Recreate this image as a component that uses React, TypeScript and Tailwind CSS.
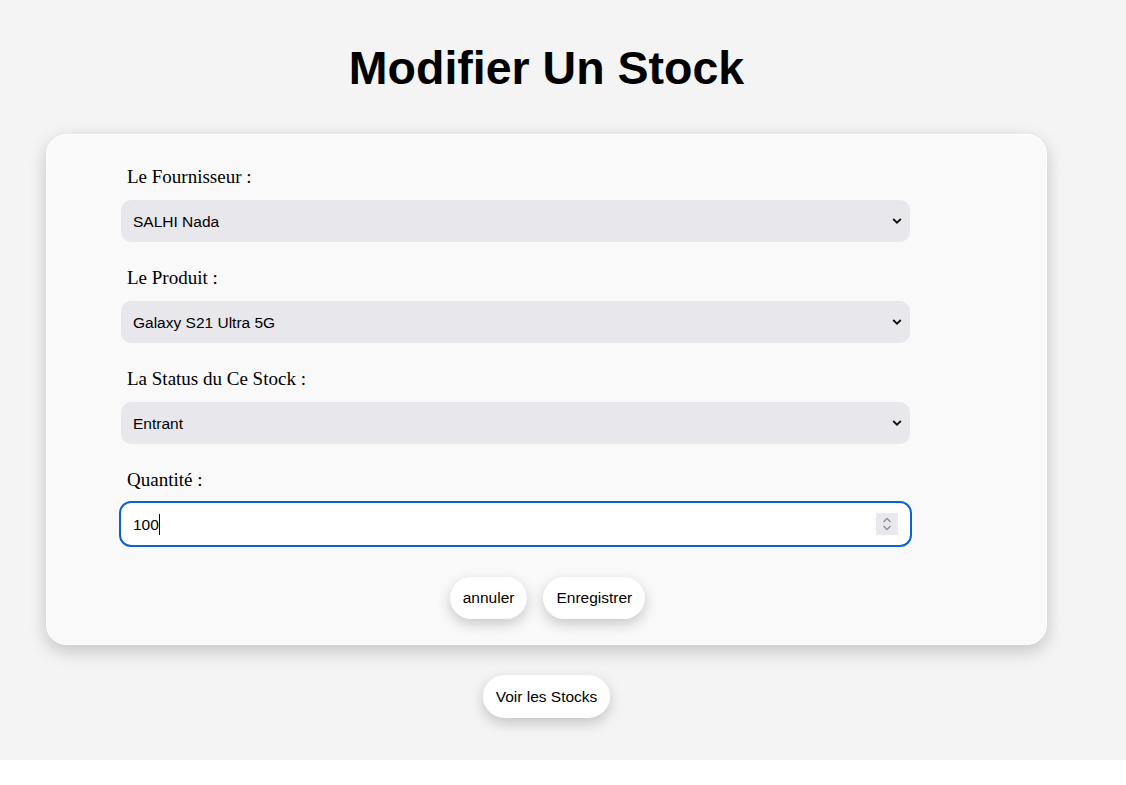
import React from 'react';

const sans = { fontFamily: '"Liberation Sans", Arial, sans-serif' };
const serif = { fontFamily: '"Liberation Serif", "Times New Roman", serif' };

const Chevron = () => (
    <svg className="absolute right-[8px] top-1/2 -translate-y-1/2 pointer-events-none" width="10" height="7" viewBox="0 0 10 7">
        <path d="M1.2 1.5 L5 5.2 L8.8 1.5" fill="none" stroke="#111" strokeWidth="1.8" />
    </svg>
);

const SelectField = ({ label, value }: { label: string; value: string }) => (
    <div className="flex flex-col">
        <label className="text-[19px] leading-[22px] text-black ml-[6px]" style={serif}>
            {label}
        </label>
        <div className="relative mt-[12px] w-[789px]">
            <select
                defaultValue={value}
                className="appearance-none w-full h-[42px] rounded-[10px] bg-[#e8e7ec] pl-[12px] pr-8 pt-px text-[15.5px] text-black outline-none"
                style={sans}
            >
                <option>{value}</option>
            </select>
            <Chevron />
        </div>
    </div>
);

export default function App() {
    return (
        <div className="w-full bg-white min-h-[785px]">
            <div className="w-full bg-[#f4f4f4] pb-[42px]">
                <div className="w-[1093px] flex flex-col items-center">
                    <h1 className="mt-[41px] text-[46.5px] leading-[54px] font-bold text-black" style={sans}>
                        Modifier Un Stock
                    </h1>

                    {/* Form card */}
                    <div className="mt-[39px] w-[1001px] bg-[#f9f9f9] border border-white rounded-[20px] shadow-[0_6px_18px_rgba(0,0,0,0.2)] pl-[74px] pt-[31px] pb-[25px]">
                        <div className="flex flex-col gap-[25px]">
                            <SelectField label="Le Fournisseur :" value="SALHI Nada" />
                            <SelectField label="Le Produit :" value="Galaxy S21 Ultra 5G" />
                            <SelectField label="La Status du Ce Stock :" value="Entrant" />

                            <div className="flex flex-col">
                                <label className="text-[19px] leading-[22px] text-black ml-[6px]" style={serif}>
                                    Quantité :
                                </label>
                                <div className="relative mt-[12px] w-[789px]">
                                    <input
                                        type="text"
                                        defaultValue="100"
                                        className="w-full h-[42px] rounded-[10px] bg-white pl-[12px] pt-px text-[15.5px] text-black outline-2 outline-solid outline-[#0a62d6] outline-offset-0"
                                        style={sans}
                                    />
                                    <span className="absolute left-[38px] top-[11px] h-[21px] w-px bg-black" />
                                    <div className="absolute right-[12px] top-[10px] w-[22px] h-[22px] bg-[#e9e9ed] flex flex-col items-center justify-center gap-[2px]">
                                        <svg width="10" height="6" viewBox="0 0 10 6">
                                            <path d="M1.5 5 L5 1.5 L8.5 5" fill="none" stroke="#8e8e96" strokeWidth="1.4" />
                                        </svg>
                                        <svg width="10" height="6" viewBox="0 0 10 6">
                                            <path d="M1.5 1 L5 4.5 L8.5 1" fill="none" stroke="#8e8e96" strokeWidth="1.4" />
                                        </svg>
                                    </div>
                                </div>
                            </div>
                        </div>

                        <div className="mt-[32px] w-[853px] flex justify-center gap-[16px]">
                            <button className="h-[42px] px-[13px] rounded-full bg-white text-[15.5px] text-black shadow-[0_5px_14px_rgba(0,0,0,0.2)]" style={sans}>
                                annuler
                            </button>
                            <button className="h-[42px] px-[13px] rounded-full bg-white text-[15.5px] text-black shadow-[0_5px_14px_rgba(0,0,0,0.2)]" style={sans}>
                                Enregistrer
                            </button>
                        </div>
                    </div>

                    <button className="mt-[30px] h-[43px] px-[13px] rounded-full bg-white text-[15.5px] text-black shadow-[0_5px_14px_rgba(0,0,0,0.2)]" style={sans}>
                        Voir les Stocks
                    </button>
                </div>
            </div>
        </div>
    );
}
